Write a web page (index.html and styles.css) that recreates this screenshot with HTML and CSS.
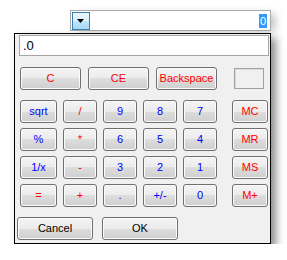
FILE: index.html
```html
<!DOCTYPE html>
<html>
<head>
<meta charset="utf-8">
<link rel="stylesheet" href="styles.css">
</head>
<body>
<div class="combo">
  <span class="drop"><svg width="8" height="5" viewBox="0 0 8 5"><path d="M0 0H7L3.5 4Z" fill="#000"/></svg></span>
  <span class="sel">0</span>
</div>
<div class="popup">
  <div class="display">.0</div>
  <div class="row1">
    <button class="btn red w61">C</button>
    <button class="btn red w61">CE</button>
    <button class="btn red w61">Backspace</button>
    <span class="membox"></span>
  </div>
  <div class="keys">
    <button class="btn blue">sqrt</button>
    <button class="btn red">/</button>
    <button class="btn blue">9</button>
    <button class="btn blue">8</button>
    <button class="btn blue">7</button>
    <button class="btn red mem">MC</button>

    <button class="btn blue">%</button>
    <button class="btn red">*</button>
    <button class="btn blue">6</button>
    <button class="btn blue">5</button>
    <button class="btn blue">4</button>
    <button class="btn red mem">MR</button>

    <button class="btn blue">1/x</button>
    <button class="btn red">-</button>
    <button class="btn blue">3</button>
    <button class="btn blue">2</button>
    <button class="btn blue">1</button>
    <button class="btn red mem">MS</button>

    <button class="btn red">=</button>
    <button class="btn red">+</button>
    <button class="btn blue">.</button>
    <button class="btn blue">+/-</button>
    <button class="btn blue">0</button>
    <button class="btn red mem">M+</button>
  </div>
  <div class="row6">
    <button class="btn dlg cancel">Cancel</button>
    <button class="btn dlg ok">OK</button>
  </div>
</div>
</body>
</html>
```
FILE: styles.css
```css
html, body {
  margin: 0;
  padding: 0;
  background: #ffffff;
  font-family: "Liberation Sans", Arial, sans-serif;
  font-size: 11px;
}

.combo {
  box-sizing: border-box;
  margin: 10px 0 0 70px;
  width: 201px;
  height: 21px;
  border: 1px solid #a9a9a9;
  background: #fff;
  display: flex;
  align-items: center;
  justify-content: space-between;
  padding: 0 3px 0 1px;
  box-shadow: 6px 2px 8px -2px rgba(0,0,0,0.25);
}

.drop {
  box-sizing: border-box;
  width: 18px;
  height: 18px;
  border: 1px solid #3c7fb1;
  background: linear-gradient(#eaf6fd 0%, #d9f0fc 50%, #bee6fd 50%, #a7d9f5 100%);
  display: flex;
  align-items: center;
  justify-content: center;
  padding-top: 2px;
}

.drop svg { display: block; }

.sel {
  background: #3399ff;
  color: #fff;
  line-height: 14px;
  height: 14px;
  padding: 0 1px;
  font-size: 11px;
}

.popup {
  box-sizing: border-box;
  margin: 2px 0 0 14px;
  width: 257px;
  height: 211px;
  border: 1px solid #000;
  background: #f0f0f0;
  padding: 1px 0 0 5px;
  box-shadow: 5px 5px 8px rgba(0,0,0,0.45);
}

.display {
  box-sizing: border-box;
  margin-left: -1px;
  width: 250px;
  height: 21px;
  border: 1px solid #a5a5a5;
  background: #fff;
  font-size: 13px;
  line-height: 19px;
  padding-left: 3px;
  color: #000;
}

.btn {
  box-sizing: border-box;
  margin: 0;
  padding: 0;
  height: 23px;
  border: 1px solid #707070;
  border-radius: 3px;
  background: linear-gradient(#f4f4f4 0%, #ebebeb 50%, #dddddd 50%, #cfcfcf 100%);
  box-shadow: inset 0 0 0 1px #fbfbfb;
  font-family: "Liberation Sans", Arial, sans-serif;
  font-size: 11px;
  line-height: 21px;
  text-align: center;
}

.red { color: #ff0000; }
.blue { color: #0000ff; }
.dlg { color: #000; }

.row1 {
  display: flex;
  align-items: flex-start;
  gap: 7px;
  margin-top: 11px;
}

.w61 { width: 61px; }

.membox {
  box-sizing: border-box;
  width: 30px;
  height: 21px;
  margin: 1px 0 0 10px;
  border: 1px solid #a0a0a0;
  box-shadow: inset 1px 1px 0 #dcdcdc;
}

.keys {
  display: grid;
  grid-template-columns: 37px 34px 34px 34px 34px 45px;
  grid-auto-rows: 23px;
  column-gap: 6px;
  row-gap: 5px;
  margin-top: 10px;
}

.mem {
  width: 36px;
  justify-self: end;
}

.row6 {
  display: flex;
  gap: 9px;
  margin: 10px 0 0 -3px;
}

.cancel, .ok { width: 76px; }
```
